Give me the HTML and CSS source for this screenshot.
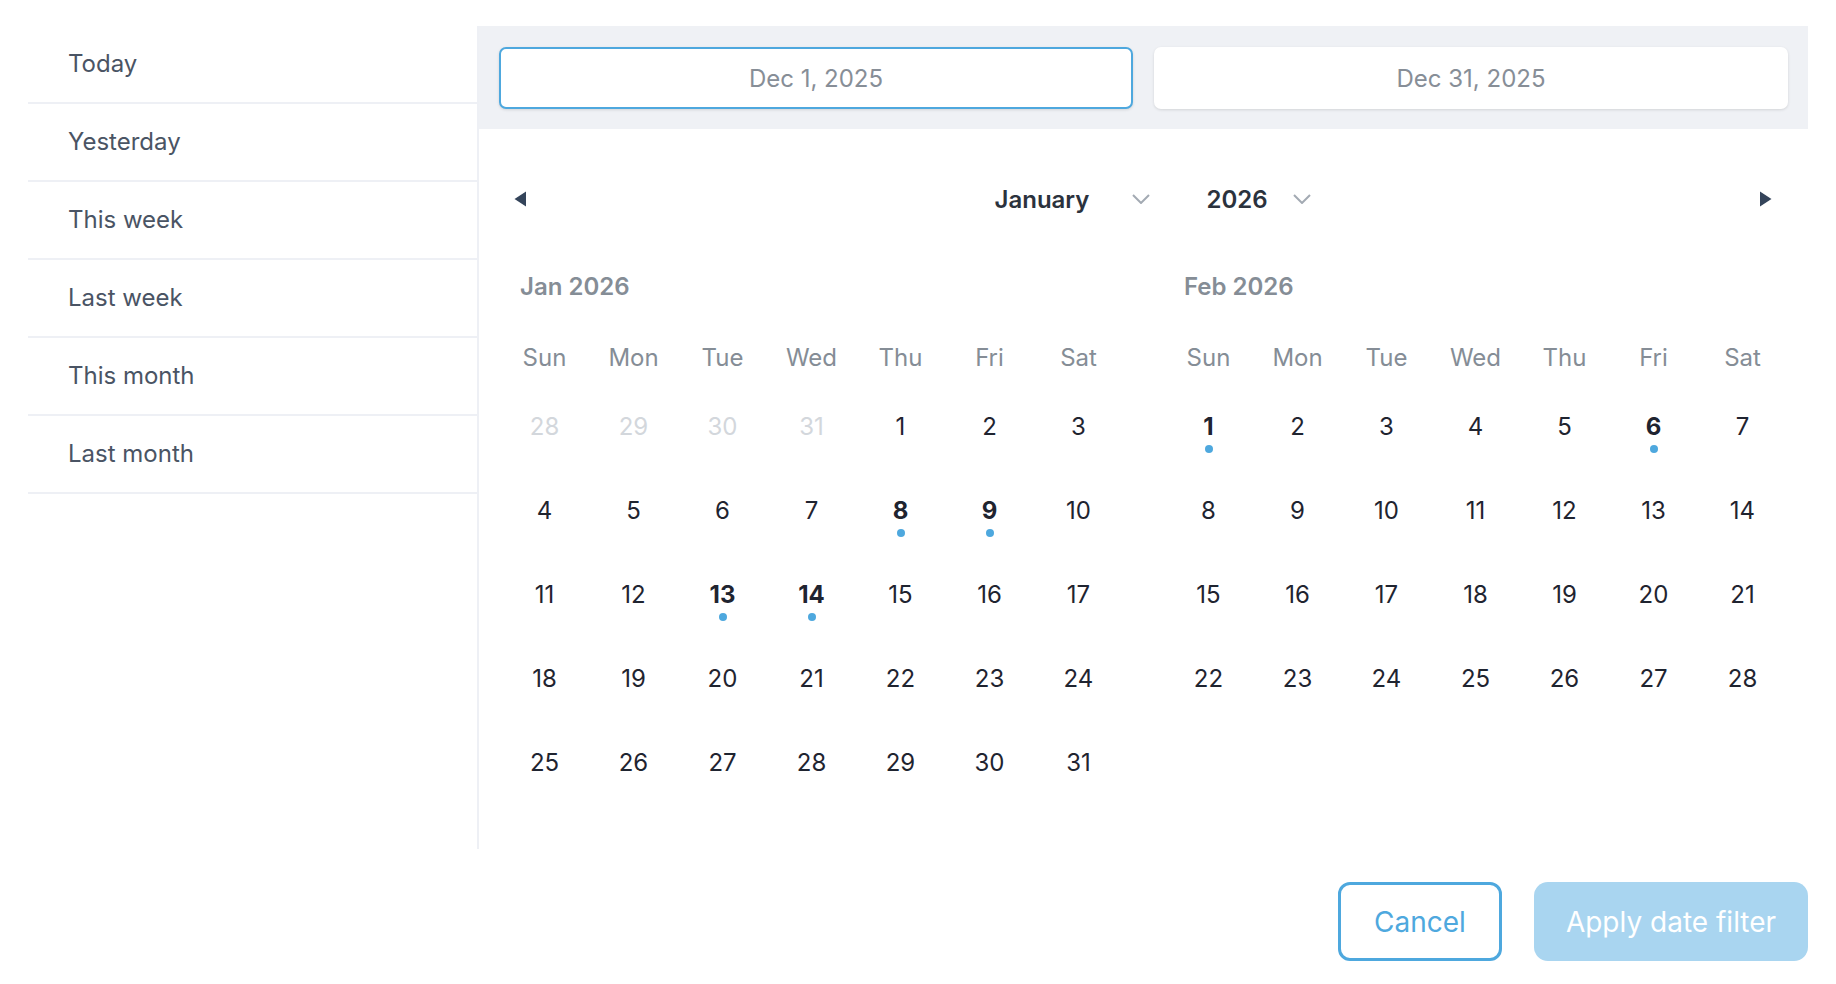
FILE: index.html
```html
<!DOCTYPE html>
<html lang="en">
  <head>
    <meta charset="UTF-8" />
    <meta name="viewport" content="width=device-width, initial-scale=1.0" />
    <title>Date filter</title>
    <link rel="stylesheet" href="styles.css">
  </head>
  <body>
    <div class="picker">
      <div class="main">
        <ul class="presets">
          <li>Today</li>
          <li>Yesterday</li>
          <li>This week</li>
          <li>Last week</li>
          <li>This month</li>
          <li>Last month</li>
        </ul>

        <div class="panel">
          <div class="range">
            <div class="date-input active">Dec 1, 2025</div>
            <div class="date-input">Dec 31, 2025</div>
          </div>

          <div class="nav">
            <button class="arrow" aria-label="Previous month">
              <svg width="12" height="16" viewBox="0 0 12 16"><path d="M12 0.5 L0.5 8 L12 15.5 Z" fill="#34445a"/></svg>
            </button>
            <div class="selects">
              <div class="select month-select">
                <span>January</span>
                <svg width="18" height="10" viewBox="0 0 18 10"><path d="M1 1 L9 9 L17 1" fill="none" stroke="#a3aab3" stroke-width="2"/></svg>
              </div>
              <div class="select year-select">
                <span>2026</span>
                <svg width="18" height="10" viewBox="0 0 18 10"><path d="M1 1 L9 9 L17 1" fill="none" stroke="#a3aab3" stroke-width="2"/></svg>
              </div>
            </div>
            <button class="arrow" aria-label="Next month">
              <svg width="12" height="16" viewBox="0 0 12 16"><path d="M0 0.5 L11.5 8 L0 15.5 Z" fill="#34445a"/></svg>
            </button>
          </div>

          <div class="months">
            <div class="month">
              <div class="month-title">Jan 2026</div>
              <div class="weekdays">
                <span>Sun</span><span>Mon</span><span>Tue</span><span>Wed</span><span>Thu</span><span>Fri</span><span>Sat</span>
              </div>
              <div class="days" id="janDays"></div>
            </div>
            <div class="month">
              <div class="month-title">Feb 2026</div>
              <div class="weekdays">
                <span>Sun</span><span>Mon</span><span>Tue</span><span>Wed</span><span>Thu</span><span>Fri</span><span>Sat</span>
              </div>
              <div class="days" id="febDays"></div>
            </div>
          </div>
        </div>
      </div>

      <div class="actions">
        <button class="cancel-button">Cancel</button>
        <button class="apply-button">Apply date filter</button>
      </div>
    </div>

    <script>
      // dias com eventos (ponto azul)
      function renderMonth(id, lead, total, marked) {
        let box = document.getElementById(id);
        let html = "";
        lead.forEach((d) => {
          html += `<div class='day muted'><span>${d}</span></div>`;
        });
        for (let d = 1; d <= total; d++) {
          if (marked.includes(d)) {
            html += `<div class='day marked'><span>${d}</span><i class='dot'></i></div>`;
          } else {
            html += `<div class='day'><span>${d}</span></div>`;
          }
        }
        box.innerHTML = html;
      }

      renderMonth("janDays", [28, 29, 30, 31], 31, [8, 9, 13, 14]);
      renderMonth("febDays", [], 28, [1, 6]);
    </script>
  </body>
</html>
```

FILE: styles.css
```css
body {
  margin: 0;
  font-family: Inter, "Noto Sans", Arial, sans-serif;
  background: #ffffff;
  color: #1f2430;
}
.picker {
  padding: 26px 28px 0 28px;
}
.main {
  display: flex;
  height: 823px;
}
.presets {
  list-style: none;
  margin: 0;
  padding: 0;
  width: 449px;
  border-right: 2px solid #eef0f5;
}
.presets li {
  height: 76px;
  line-height: 76px;
  padding-left: 40px;
  border-bottom: 2px solid #eef0f5;
  font-size: 24px;
  color: #4a5464;
}
.panel {
  flex: 1;
}
.range {
  display: grid;
  grid-template-columns: 1fr 1fr;
  gap: 21px;
  padding: 21px 20px 20px 20px;
  background: #eff1f5;
}
.date-input {
  height: 62px;
  box-sizing: border-box;
  border: 2px solid transparent;
  border-radius: 7px;
  background: #ffffff;
  box-shadow: 0 1px 3px rgba(0, 0, 0, 0.12);
  font-size: 24px;
  color: #878e97;
  display: flex;
  align-items: center;
  justify-content: center;
}
.date-input.active {
  border-color: #4ea8de;
}
.nav {
  display: grid;
  grid-template-columns: auto 1fr auto;
  align-items: center;
  height: 60px;
  margin-top: 40px;
  padding: 0 30px 0 29px;
}
.arrow {
  border: none;
  background: none;
  padding: 0;
  width: 24px;
  height: 24px;
  display: flex;
  align-items: center;
  justify-content: center;
  cursor: pointer;
}
.selects {
  display: flex;
  justify-content: center;
  gap: 57px;
  padding-left: 19px;
}
.select {
  display: flex;
  align-items: center;
  justify-content: space-between;
  font-size: 24px;
  font-weight: 600;
  color: #2b323d;
}
.month-select {
  width: 155px;
}
.year-select {
  width: 104px;
}
.months {
  display: grid;
  grid-template-columns: 623px 623px;
  gap: 41px;
  padding: 0 19px 0 21px;
}
.month-title {
  margin-top: 42px;
  padding-left: 20px;
  line-height: 32px;
  font-size: 24px;
  font-weight: 600;
  color: #858d96;
}
.weekdays {
  display: grid;
  grid-template-columns: repeat(7, 89px);
  margin-top: 27px;
  height: 54px;
  align-items: center;
  font-size: 24px;
  color: #858d96;
  text-align: center;
}
.days {
  display: grid;
  grid-template-columns: repeat(7, 89px);
  grid-auto-rows: 84px;
}
.day {
  display: flex;
  flex-direction: column;
  align-items: center;
  padding-top: 28px;
  box-sizing: border-box;
  font-size: 24px;
  line-height: 30px;
  color: #1f2430;
}
.day.muted {
  color: #d3d7dc;
}
.day.marked {
  font-weight: 700;
}
.dot {
  width: 8px;
  height: 8px;
  border-radius: 50%;
  background: #4ea8de;
  margin-top: 3px;
}
.actions {
  display: flex;
  justify-content: flex-end;
  gap: 32px;
  margin-top: 33px;
}
.actions button {
  height: 79px;
  font-family: Inter, "Noto Sans", Arial, sans-serif;
  font-size: 28px;
  cursor: pointer;
}
.cancel-button {
  width: 164px;
  background: #ffffff;
  color: #4ea8de;
  border: 3px solid #4ea8de;
  border-radius: 12px;
}
.apply-button {
  width: 274px;
  background: #a9d5f0;
  color: #ffffff;
  border: none;
  border-radius: 14px;
}
```
